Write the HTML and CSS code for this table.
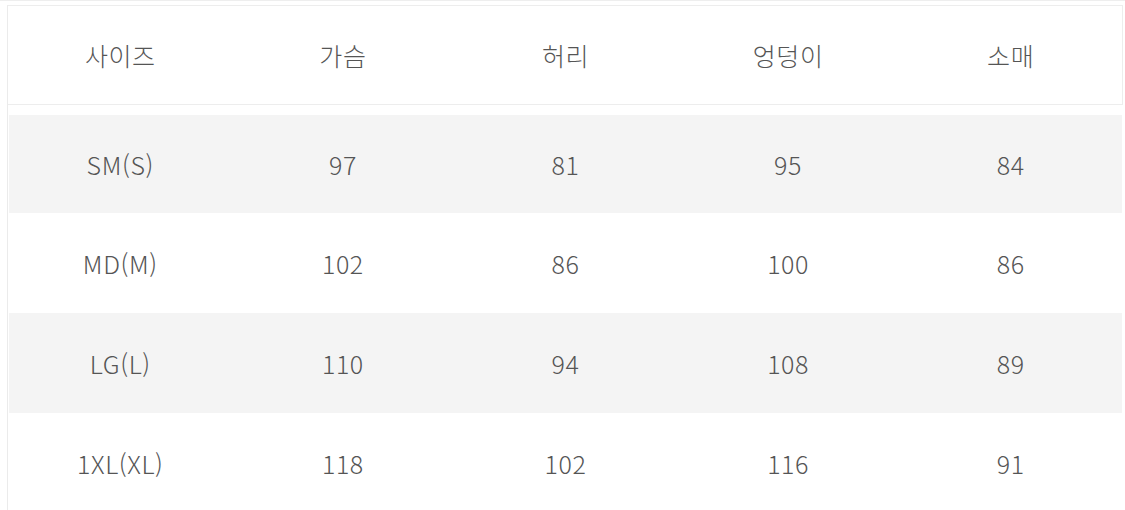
FILE: index.html
```html
<!DOCTYPE html>
<html lang="ko">
<head>
<meta charset="utf-8">
<title>사이즈표</title>
<link rel="stylesheet" href="styles.css">
</head>
<body>
<div class="page">
  <div class="table">
    <div class="row head">
      <div class="cell">사이즈</div>
      <div class="cell">가슴</div>
      <div class="cell">허리</div>
      <div class="cell">엉덩이</div>
      <div class="cell">소매</div>
    </div>
    <div class="row shade">
      <div class="cell">SM(S)</div>
      <div class="cell">97</div>
      <div class="cell">81</div>
      <div class="cell">95</div>
      <div class="cell">84</div>
    </div>
    <div class="row">
      <div class="cell">MD(M)</div>
      <div class="cell">102</div>
      <div class="cell">86</div>
      <div class="cell">100</div>
      <div class="cell">86</div>
    </div>
    <div class="row shade">
      <div class="cell">LG(L)</div>
      <div class="cell">110</div>
      <div class="cell">94</div>
      <div class="cell">108</div>
      <div class="cell">89</div>
    </div>
    <div class="row">
      <div class="cell">1XL(XL)</div>
      <div class="cell">118</div>
      <div class="cell">102</div>
      <div class="cell">116</div>
      <div class="cell">91</div>
    </div>
  </div>
</div>
</body>
</html>
```
FILE: styles.css
```css
html, body {
  margin: 0;
  padding: 0;
  background: #ffffff;
}
body {
  font-family: "Noto Sans CJK KR", "Noto Sans", sans-serif;
  color: #555555;
  width: 1125px;
  height: 510px;
  overflow: hidden;
}
.page {
  padding-top: 5px;
  box-shadow: inset 0 5px 0 -4px #eeeeee;
}
.table {
  margin-left: 7px;
  border-left: 1px solid #ebebeb;
  height: 520px;
}
.row {
  display: grid;
  grid-template-columns: repeat(5, 1fr);
  height: 100px;
  align-items: center;
  margin: 0 3px 0 1px;
}
.row.head {
  height: 98px;
  margin: 0 2px 10px 0;
  border-top: 1px solid #ededed;
  border-right: 1px solid #ededed;
  border-bottom: 1px solid #ededed;
  padding-left: 1px;
}
.row.shade {
  background: #f4f4f4;
}
.row:nth-child(2) {
  height: 98px;
}
.cell {
  text-align: center;
  font-size: 25px;
  font-weight: 300;
  letter-spacing: 0.6px;
  line-height: 1;
}
```
